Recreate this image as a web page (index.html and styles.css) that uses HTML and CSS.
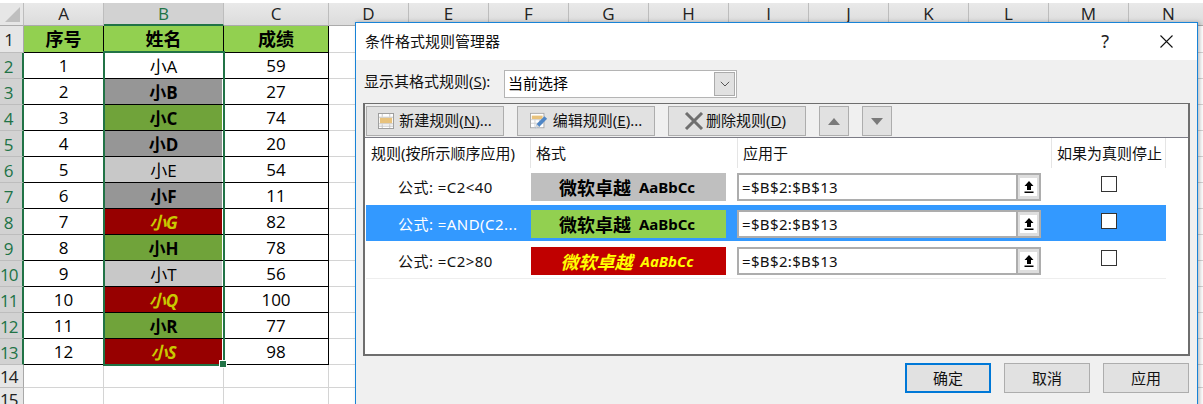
FILE: index.html
```html
<!DOCTYPE html>
<html lang="zh-CN">
<head>
<meta charset="utf-8">
<title>条件格式规则管理器</title>
<link rel="stylesheet" href="styles.css">
</head>
<body>
<div class="app">
  <div class="sheet">
    <div class="corner"><span class="tri"></span></div>
    <div class="ch">A</div><div class="ch sel">B</div><div class="ch">C</div><div class="ch">D</div><div class="ch">E</div><div class="ch">F</div><div class="ch">G</div><div class="ch">H</div><div class="ch">I</div><div class="ch">J</div><div class="ch">K</div><div class="ch">L</div><div class="ch">M</div><div class="ch">N</div>

    <div class="rh">1</div><div class="c hd">序号</div><div class="c hd">姓名</div><div class="c hd">成绩</div><div class="blank"></div>
    <div class="rh on">2</div><div class="c">1</div><div class="c n"><span>小A</span></div><div class="c">59</div><div class="blank"></div>
    <div class="rh on">3</div><div class="c">2</div><div class="c n"><span class="gray">小B</span></div><div class="c">27</div><div class="blank"></div>
    <div class="rh on">4</div><div class="c">3</div><div class="c n"><span class="green">小C</span></div><div class="c">74</div><div class="blank"></div>
    <div class="rh on">5</div><div class="c">4</div><div class="c n"><span class="gray">小D</span></div><div class="c">20</div><div class="blank"></div>
    <div class="rh on">6</div><div class="c">5</div><div class="c n"><span class="light">小E</span></div><div class="c">54</div><div class="blank"></div>
    <div class="rh on">7</div><div class="c">6</div><div class="c n"><span class="gray">小F</span></div><div class="c">11</div><div class="blank"></div>
    <div class="rh on">8</div><div class="c">7</div><div class="c n"><span class="red">小G</span></div><div class="c">82</div><div class="blank"></div>
    <div class="rh on">9</div><div class="c">8</div><div class="c n"><span class="green">小H</span></div><div class="c">78</div><div class="blank"></div>
    <div class="rh on">10</div><div class="c">9</div><div class="c n"><span class="light">小T</span></div><div class="c">56</div><div class="blank"></div>
    <div class="rh on">11</div><div class="c">10</div><div class="c n"><span class="red">小Q</span></div><div class="c">100</div><div class="blank"></div>
    <div class="rh on">12</div><div class="c">11</div><div class="c n"><span class="green">小R</span></div><div class="c">77</div><div class="blank"></div>
    <div class="rh on">13</div><div class="c">12</div><div class="c n"><span class="red">小S</span></div><div class="c">98</div><div class="blank"></div>
    <div class="rh low">14</div><div class="g"></div><div class="g"></div><div class="g"></div><div class="blank"></div>
    <div class="rh low">15</div><div class="g"></div><div class="g"></div><div class="g"></div><div class="blank"></div>
  </div>
  <div class="selection"><i class="handle"></i></div>

  <section class="dialog">
    <header class="titlebar">
      <span class="title">条件格式规则管理器</span>
      <span class="help">?</span>
      <svg class="close" width="13" height="13" viewBox="0 0 13 13"><path d="M.5.5l12 12M12.5.5l-12 12" stroke="#111" stroke-width="1.1" fill="none"/></svg>
    </header>
    <div class="body">
      <div class="showrow">
        <label class="showlabel">显示其格式规则(<u>S</u>):</label>
        <div class="select">
          <span class="seltext">当前选择</span>
          <span class="chev"><svg width="10" height="6" viewBox="0 0 10 6"><path d="M.8.8L5 5l4.2-4.2" stroke="#555" fill="none"/></svg></span>
        </div>
      </div>
      <div class="panel">
        <div class="toolbar">
          <button class="tbtn">
            <svg width="16" height="16" viewBox="0 0 17 17"><rect x=".5" y=".5" width="16" height="16" fill="#fff" stroke="#9a9a9a"/><rect x="2" y="5" width="13" height="6" fill="#e8c27c"/><path d="M1 4.5h15M1 11.5h15M1 14h15M4.5 1v3M12.5 1v3M4.5 12v4M12.5 12v4" stroke="#c4c4c4"/></svg>
            <span class="lbl">新建规则(<u>N</u>)...</span>
          </button>
          <button class="tbtn">
            <svg width="18" height="18" viewBox="0 0 20 20"><rect x=".5" y="1.5" width="15" height="16" fill="#fff" stroke="#a5a5a5"/><rect x="2" y="4" width="12" height="4" fill="#e8c27c"/><path d="M1 8.5h14M1 12.5h14M5.5 8v9M10.5 8v9" stroke="#cfcfcf"/><path d="M6 18l1.4-4.6L16 4.6l3 3-8.6 8.8z" fill="#4f86c6"/><path d="M6 18l1.4-4.6 3 3z" fill="#d9d9d9"/></svg>
            <span class="lbl">编辑规则(<u>E</u>)...</span>
          </button>
          <button class="tbtn del">
            <svg width="20" height="18" viewBox="0 0 20 18"><path d="M2 1l16 16M18 1L2 17" stroke="#6f6f6f" stroke-width="3" fill="none"/></svg>
            <span class="lbl">删除规则(<u>D</u>)</span>
          </button>
          <button class="abtn"><svg width="12" height="7" viewBox="0 0 12 7"><path d="M6 0l6 7H0z" fill="#7a7a7a"/></svg></button>
          <button class="abtn"><svg width="12" height="7" viewBox="0 0 12 7"><path d="M0 0h12L6 7z" fill="#7a7a7a"/></svg></button>
        </div>
        <div class="list">
          <div class="lhead">
            <div class="lh h1">规则(按所示顺序应用)</div>
            <div class="lh h2">格式</div>
            <div class="lh h3">应用于</div>
            <div class="lh h4">如果为真则停止</div>
          </div>
          <div class="rule first">
            <div class="formula">公式: =C2&lt;40</div>
            <div class="preview p-gray"><b>微软卓越</b><b class="sample">AaBbCc</b></div>
            <div class="range"><span class="rtext">=$B$2:$B$13</span><span class="upl"><span class="uin"><svg width="10" height="12" viewBox="0 0 10 12"><path d="M5 0l4.5 5H7v4H3V5H.5zM.5 10.5h9V12h-9z" fill="#000"/></svg></span></span></div>
            <div class="stop"><span class="cb"></span></div>
          </div>
          <div class="rule active">
            <div class="formula">公式: =AND(C2...</div>
            <div class="preview p-green"><b>微软卓越</b><b class="sample">AaBbCc</b></div>
            <div class="range"><span class="rtext">=$B$2:$B$13</span><span class="upl"><span class="uin"><svg width="10" height="12" viewBox="0 0 10 12"><path d="M5 0l4.5 5H7v4H3V5H.5zM.5 10.5h9V12h-9z" fill="#000"/></svg></span></span></div>
            <div class="stop"><span class="cb"></span></div>
          </div>
          <div class="rule last">
            <div class="formula">公式: =C2&gt;80</div>
            <div class="preview p-red"><b>微软卓越</b><b class="sample">AaBbCc</b></div>
            <div class="range"><span class="rtext">=$B$2:$B$13</span><span class="upl"><span class="uin"><svg width="10" height="12" viewBox="0 0 10 12"><path d="M5 0l4.5 5H7v4H3V5H.5zM.5 10.5h9V12h-9z" fill="#000"/></svg></span></span></div>
            <div class="stop"><span class="cb"></span></div>
          </div>
        </div>
      </div>
      <footer class="footer">
        <button class="fbtn primary">确定</button>
        <button class="fbtn">取消</button>
        <button class="fbtn">应用</button>
      </footer>
    </div>
  </section>
</div>
</body>
</html>
```
FILE: styles.css
```css
* { box-sizing: border-box; }
html, body { margin: 0; padding: 0; }
body { width: 1203px; height: 404px; overflow: hidden; background: #fff; font-family: "Noto Sans", "Noto Sans CJK SC", sans-serif; color: #000; }
.app { position: relative; width: 1203px; height: 404px; overflow: hidden; }

.sheet { display: grid; grid-template-columns: 24px 80px 120px 105px repeat(11, 80px); grid-template-rows: 23px 27px repeat(12, 26px) 23px 23px; width: 1208px; padding-top: 3px; font-family: "Open Sans", "Noto Sans CJK SC", sans-serif; }
.corner { background: #e6e6e6; border-right: 1px solid #bdbdbd; border-bottom: 1px solid #ababab; display: flex; align-items: flex-end; justify-content: flex-end; padding: 0 3px 3px 0; }
.tri { width: 0; height: 0; border-style: solid; border-width: 0 0 15px 15px; border-color: transparent transparent #bfbfbf transparent; }
.ch { background: linear-gradient(#e9e9e9, #dcdcdc); border-right: 1px solid #bdbdbd; border-bottom: 1px solid #ababab; font-size: 17px; line-height: 22px; text-align: center; color: #222; }
.ch.sel { background: #d2d2d2; border-bottom: 2px solid #217346; color: #217346; }
.rh { grid-column: 1; background: #e6e6e6; border-right: 1px solid #a8a8a8; border-bottom: 1px solid #bdbdbd; font-size: 17px; text-align: center; padding: 3px 6px 0 0; line-height: 22px; color: #222; white-space: nowrap; letter-spacing: -1px; }
.rh.on { background: #d2d2d2; border-right: 2px solid #217346; color: #217346; }
.rh.low { padding-top: 1px; line-height: 21px; }
.c { border-right: 1px solid #000; border-bottom: 1px solid #000; display: flex; align-items: center; justify-content: center; font-size: 17px; background: #fff; }
.c.hd { background: #92d050; font-weight: 700; font-size: 18px; padding-bottom: 2px; }
.c.n { padding: 0 1px; font-size: 17px; align-items: stretch; }
.c.n span { flex: 1; display: flex; align-items: center; justify-content: center; }
.gray { background: #969696; font-weight: 700; }
.green { background: #70a33a; font-weight: 700; }
.light { background: #c8c8c8; }
.red { background: #970000; color: #c9c900; font-weight: 700; font-style: italic; }
.blank { grid-column: 5 / -1; background-image: repeating-linear-gradient(90deg, transparent 0 79px, #d4d4d4 79px 80px); border-bottom: 1px solid #d4d4d4; }
.g { border-right: 1px solid #d4d4d4; border-bottom: 1px solid #d4d4d4; }

.selection { position: absolute; left: 103px; top: 51px; width: 122px; height: 315px; border: 2px solid #217346; pointer-events: none; }
.handle { position: absolute; right: -3px; bottom: -3px; width: 6px; height: 6px; background: #217346; outline: 1px solid #fff; }

.dialog { position: absolute; left: 355px; top: 22px; width: 843px; height: 390px; border: 1px solid #1883d7; background: #f0f0f0; box-shadow: 2px 0 4px rgba(0,0,0,.25); display: flex; flex-direction: column; font-size: 15px; }
.titlebar { height: 37px; background: #fff; display: flex; align-items: center; padding: 0 18px 0 9px; flex: none; }
.title { flex: 1; color: #111; line-height: 20px; margin-top: -2px; }
.help { margin-right: 51px; font-size: 18px; line-height: 20px; color: #222; margin-top: -1px; }
.close { flex: none; margin-right: 6px; }
.body { flex: 1; display: flex; flex-direction: column; padding: 10px 8px 0 7px; }

.showrow { display: flex; align-items: center; height: 28px; }
.showlabel { width: 141px; padding-left: 1px; flex: none; color: #111; margin-top: -8px; }
.select { width: 233px; height: 28px; background: #fff; border: 1px solid #b4b4b4; display: flex; align-items: center; justify-content: space-between; padding: 1px 1px 1px 4px; }
.seltext { margin-top: -4px; margin-left: -1px; }
.chev { width: 21px; height: 24px; background: #e1e1e1; border: 1px solid #ababab; display: flex; align-items: center; justify-content: center; }

.panel { margin-top: 5px; width: 827px; height: 253px; border: 2px solid #6e6e6e; border-top-width: 1px; display: flex; flex-direction: column; flex: none; }
.toolbar { height: 34px; flex: none; padding: 2px 0 2px 1px; display: flex; gap: 13px; border-bottom: 1px solid #7c7c86; }
button { font: inherit; color: #111; margin: 0; padding: 0; }
.tbtn { width: 138px; height: 30px; background: #e1e1e1; border: 1px solid #adadad; display: flex; align-items: center; justify-content: center; gap: 5px; white-space: nowrap; }
.tbtn.del { gap: 2px; padding-right: 4px; }
.lbl { margin-top: -4px; }
.abtn { width: 30px; height: 30px; background: #e1e1e1; border: 1px solid #adadad; display: flex; align-items: center; justify-content: center; }

.list { flex: 1; background: #fff; min-height: 0; }
.lhead { display: flex; height: 30px; }
.lh { height: 30px; border-right: 1px solid #e5e5e5; line-height: 30px; padding-left: 5px; white-space: nowrap; overflow: hidden; color: #111; }
.h1 { width: 166px; padding-left: 6px; }
.h2 { width: 207px; }
.h3 { width: 314px; }
.h4 { width: 114px; }

.rule { display: flex; align-items: center; width: 800px; height: 36px; margin-left: 1px; margin-bottom: 1px; padding-top: 1px; }
.rule.last { border-bottom: 1px solid #eee; height: 37px; }
.rule.active { background: #3399ff; color: #fff; }
.rule.active .formula { color: #fff; }
.formula { width: 165px; padding-left: 32px; flex: none; color: #111; white-space: nowrap; letter-spacing: .45px; }
.preview { width: 195px; height: 28px; flex: none; margin-right: 11px; display: flex; align-items: center; justify-content: center; font-size: 18px; color: #000; padding-right: 3px; }
.preview b { font-weight: 700; }
.sample { font-size: 15px; margin-left: 8px; }
.p-gray { background: #bfbfbf; }
.p-green { background: #92d050; }
.p-red { background: #c00000; color: #ff0; font-style: italic; }
.range { width: 304px; height: 28px; flex: none; background: #fff; border: 2px solid #adadad; border-right: 0; display: flex; align-items: center; color: #111; padding-left: 3px; justify-content: space-between; }
.rtext { font-size: 15px; letter-spacing: .35px; }
.upl { width: 25px; height: 28px; margin: -2px 0; background: #dedede; border: 2px solid #adadad; display: flex; align-items: center; justify-content: center; padding: 0 2px; flex: none; }
.uin { width: 18px; height: 18px; background: #fff; display: flex; align-items: center; justify-content: center; }
.stop { flex: 1; padding-left: 60px; display: flex; align-self: flex-start; padding-top: 7px; }
.cb { width: 16px; height: 16px; border: 1px solid #333; background: #fff; display: block; }

.footer { margin-top: 7px; display: flex; justify-content: flex-end; gap: 13px; }
.fbtn { width: 86px; height: 30px; background: #e1e1e1; border: 1px solid #adadad; font-size: 15px; padding-bottom: 2px; }
.fbtn.primary { border: 2px solid #0078d7; }
```
